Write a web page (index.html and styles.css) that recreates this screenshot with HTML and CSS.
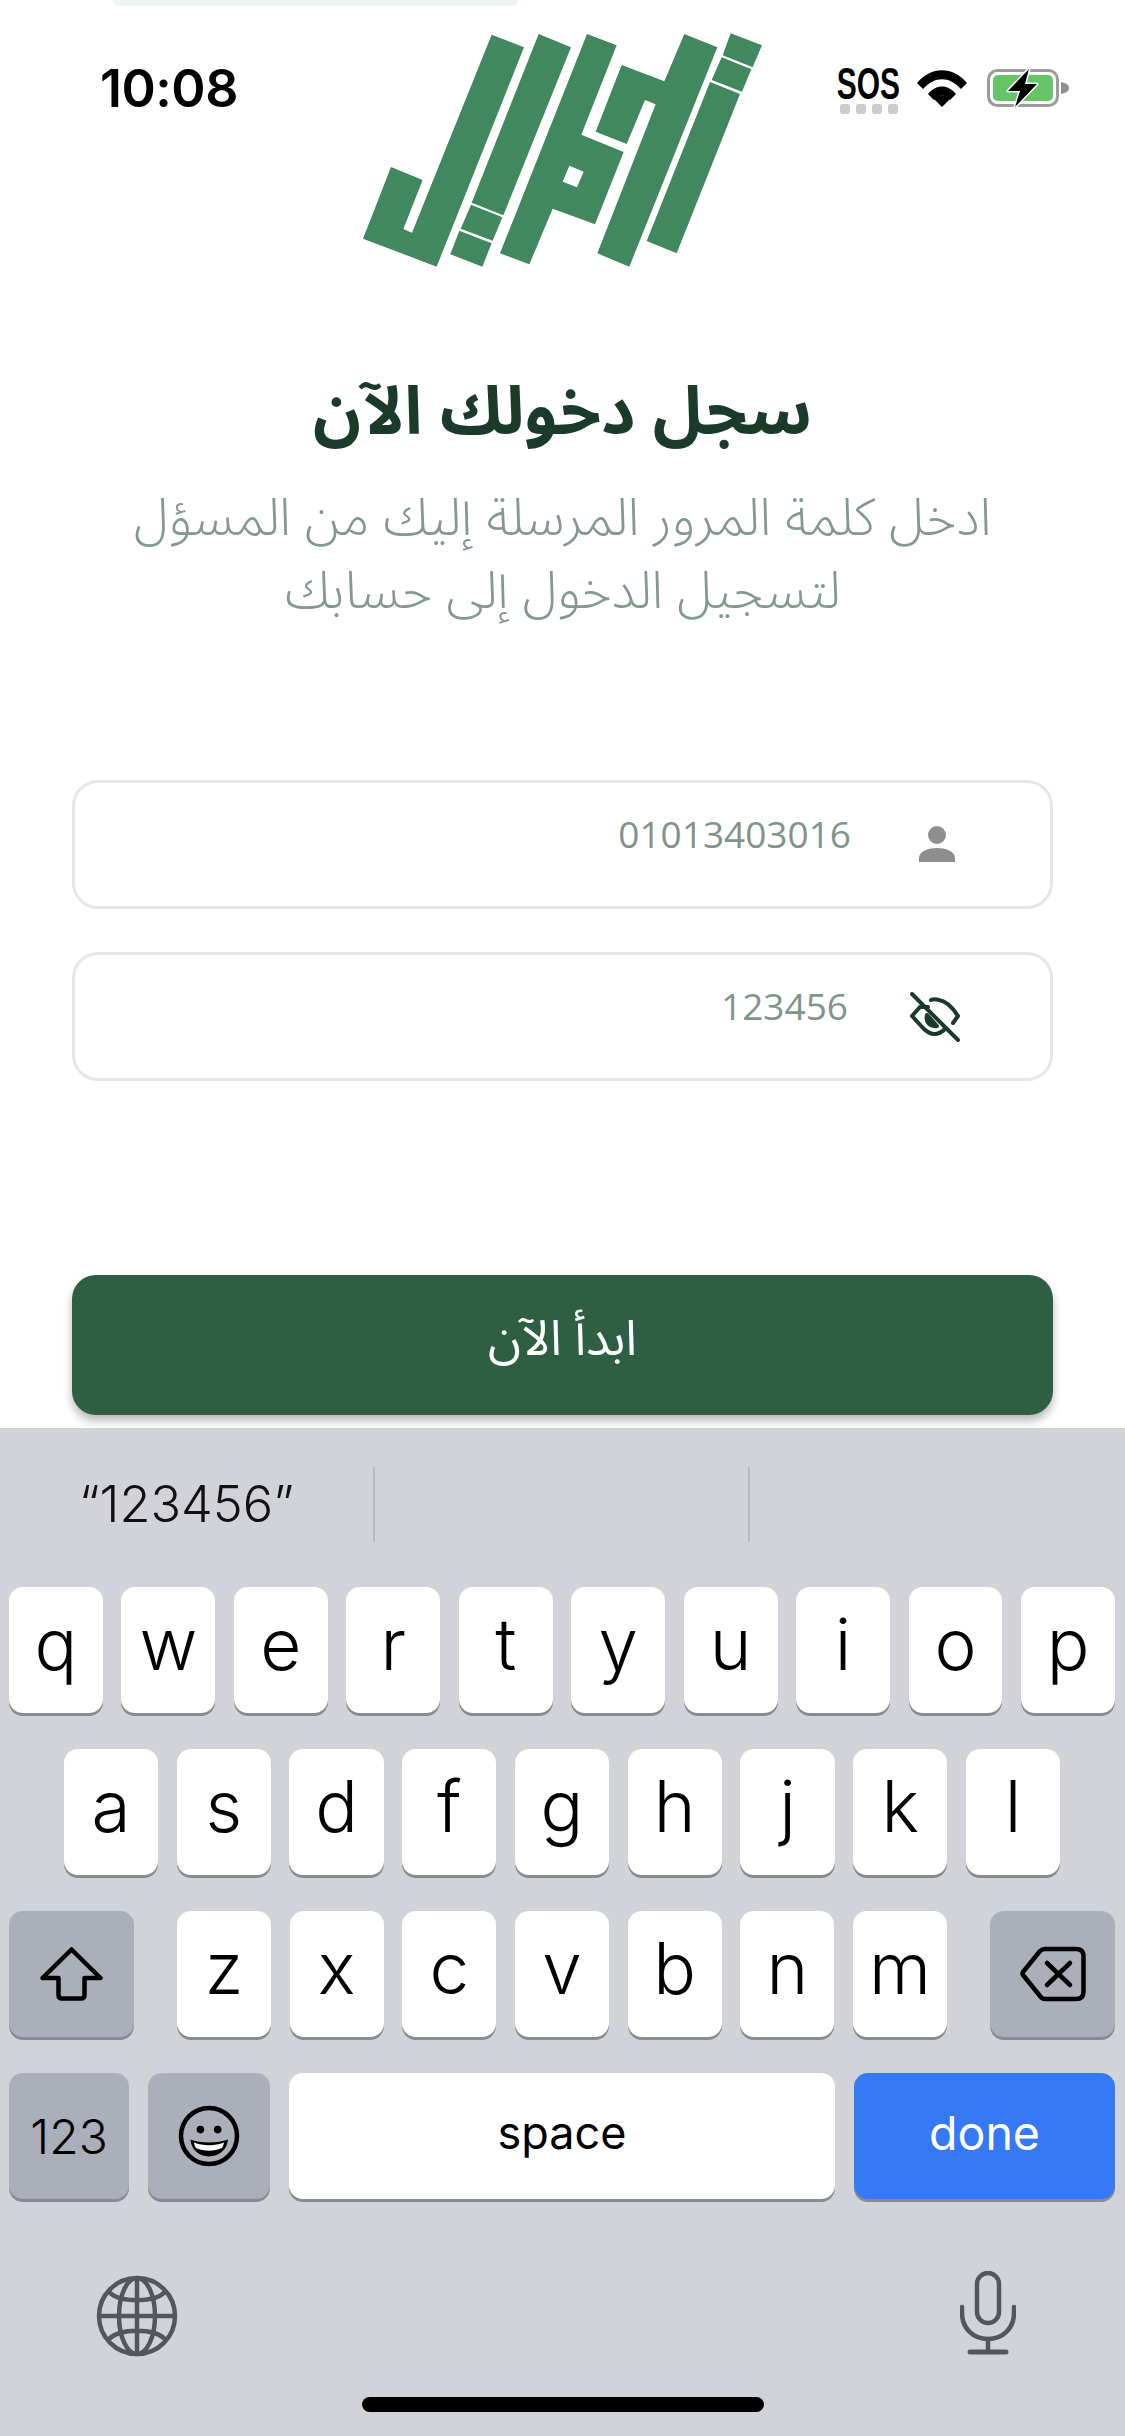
FILE: index.html
```html
<!DOCTYPE html>
<html lang="ar">
<head>
<meta charset="utf-8">
<title>تسجيل الدخول</title>
<link rel="stylesheet" href="styles.css">
</head>
<body>
<div class="page">
  <div class="status">
    <span class="time">10:08</span>
    <div class="status-right">
      <div class="sos"><span class="sos-text">SOS</span><div class="dots"><i></i><i></i><i></i><i></i></div></div>
      <svg class="wifi" viewBox="0 0 50 37"><path d="M0 13 C14 -4 36 -4 50 13 L44 19 C32 6 18 6 6 19Z M11 24 C19 14 31 14 39 24 L33 30 C28 24 22 24 17 30Z" fill="#000"/><path d="M17 29 C22 24 28 24 33 29 L25 37Z" fill="#000"/></svg>
      <svg class="battery" viewBox="0 0 82 38">
        <rect x="1.5" y="1.5" width="69" height="35" rx="9" fill="none" stroke="#9b9b9b" stroke-width="3"/>
        <rect x="6" y="6" width="60" height="26" rx="5" fill="#65c466"/>
        <path d="M74 13 C79 14 82 16 82 19 C82 22 79 24 74 25Z" fill="#8e8e8e"/>
        <path d="M42 0 L21 22 H33 L28 38 L50 15 H38Z" fill="#000" stroke="#fff" stroke-width="3" stroke-linejoin="round" paint-order="stroke"/>
      </svg>
    </div>
  </div>

  <div class="peek"></div>
  <svg class="logo" viewBox="0 0 1320 780" fill="#41885f">
    <path d="M455 44L552 82L290 740L69 656L153 441L248 480L190 627L216 638Z"/>
    <path d="M596 42L693 82L490 586L395 548Z"/>
    <path d="M393 554L487 592L458 662L362 626Z"/>
    <path d="M358 632L455 670L427 740L331 703Z"/>
    <path fill-rule="evenodd" d="M741 42L830 76L724 344L851 396L765 613L638 566L568 733L480 700Z M688 437L731 455L711 502L668 485Z"/>
    <path d="M845 135L973 184L1033 42L1132 82L868 740L772 700L947 253L915 240L860 372L767 335Z"/>
    <path d="M1110 186L1200 222L1010 700L920 663Z"/>
    <path d="M1145 112L1234 148L1206 215L1115 180Z"/>
    <path d="M1172 40L1266 76L1238 142L1148 106Z"/>
  </svg>

  <h1 class="title">سجل دخولك الآن</h1>
  <p class="sub">ادخل كلمة المرور المرسلة إليك من المسؤل<br>لتسجيل الدخول إلى حسابك</p>

  <div class="field">
    <svg class="person" viewBox="0 0 36 36"><circle cx="18" cy="9" r="9" fill="#8e8e8e"/><path d="M0 36 V32 C0 25 10 22 18 22 C26 22 36 25 36 32 V36Z" fill="#8e8e8e"/></svg>
    <span class="fval">01013403016</span>
  </div>
  <div class="field field-two">
    <svg class="eye" viewBox="0 0 50 50" fill="none" stroke="#1a3a2a" stroke-width="4" stroke-linecap="round" stroke-linejoin="round"><path d="M10 15 L2 24 L13 36 C17 40 20 42 24 42 C28 42 32 40 35 37"/><path d="M21 8 C23 7 26 7 29 8 C36 9 43 16 48 24 L43 31"/><path d="M10 15 H18"/><path d="M17 23 C15 30 20 35 27 34Z" fill="#1a3a2a"/><path d="M2 2 L48 48"/></svg>
    <span class="fval">123456</span>
  </div>

  <button class="cta">ابدأ الآن</button>

  <div class="keyboard">
    <div class="suggest">
      <div class="sg sg-first">“123456”</div><div class="sg"></div><div class="sg sg-last"></div>
    </div>
    <div class="row row1">
      <span class="key">q</span><span class="key">w</span><span class="key">e</span><span class="key">r</span><span class="key">t</span><span class="key">y</span><span class="key">u</span><span class="key">i</span><span class="key">o</span><span class="key">p</span>
    </div>
    <div class="row row2">
      <span class="key">a</span><span class="key">s</span><span class="key">d</span><span class="key">f</span><span class="key">g</span><span class="key">h</span><span class="key">j</span><span class="key">k</span><span class="key">l</span>
    </div>
    <div class="row row3">
      <span class="key dark wide"><svg width="63" height="54" viewBox="0 0 63 54" fill="none" stroke="#000" stroke-width="4.5" stroke-linejoin="round"><path d="M31.5 2.5 L60.5 31 H44.5 V48 Q44.5 51.5 41 51.5 H22 Q18.5 51.5 18.5 48 V31 H2.5Z"/></svg></span>
      <div class="letters"><span class="key">z</span><span class="key">x</span><span class="key">c</span><span class="key">v</span><span class="key">b</span><span class="key">n</span><span class="key">m</span></div>
      <span class="key dark wide"><svg width="66" height="56" viewBox="0 0 66 56" fill="none" stroke="#000" stroke-width="4.5" stroke-linejoin="round" stroke-linecap="round"><path d="M25 3 H56 Q63.5 3 63.5 10 V46 Q63.5 53 56 53 H25 Q22 53 20 50 L3 29 Q2 28 3 26 L20 5 Q22 3 25 3Z"/><path d="M27 17 L50 39 M50 17 L27 39"/></svg></span>
    </div>
    <div class="row row4">
      <span class="key dark small k123">123</span>
      <span class="key dark kemoji"><svg width="62" height="62" viewBox="0 0 62 62" fill="none"><circle cx="31" cy="31" r="28" stroke="#000" stroke-width="4.5"/><circle cx="22.4" cy="24.6" r="3.8" fill="#000"/><circle cx="39.7" cy="24.6" r="3.8" fill="#000"/><path d="M12.4 34.6 C22 38.6 40 38.6 50 34.6 C49 45 41 51.5 31 51.5 C21 51.5 13.4 45 12.4 34.6Z" fill="#000"/><path d="M16 37.5 C25 41 37 41 46 37.5 C45.5 40 44.8 41.6 44 43 C36 46.5 26 46.5 18 43 C17 41.6 16.4 40 16 37.5Z" fill="#fff"/></svg></span>
      <span class="key small kspace">space</span>
      <span class="key small kdone">done</span>
    </div>
    <div class="kb-bottom">
      <svg class="globe" width="82" height="82" viewBox="0 0 82 82" fill="none" stroke="#54565b" stroke-width="4.5"><circle cx="41" cy="41" r="38"/><ellipse cx="41" cy="41" rx="18" ry="38"/><path d="M41 3 V79 M3 41 H79 M13 17 C24 28 58 28 69 17 M13 64 C24 53 58 53 69 64"/></svg>
      <svg class="mic" width="56" height="84" viewBox="0 0 56 84" fill="none" stroke="#54565b" stroke-width="4.5" stroke-linecap="round"><rect x="17" y="2" width="22" height="50" rx="11"/><path d="M2 36 V42 C2 57 13 68 28 68 C43 68 54 57 54 42 V36"/><path d="M28 68 V81"/><path d="M10 81 H46" stroke-width="5"/></svg>
    </div>
    <div class="home"></div>
  </div>
</div>
</body>
</html>
```
FILE: styles.css
```css
* { box-sizing: border-box; }
html, body { margin: 0; padding: 0; }
body { width: 1125px; height: 2436px; overflow: hidden; background: #fff; font-family: Inter, "Liberation Sans", sans-serif; }
.page { position: relative; width: 1125px; height: 2436px; display: flex; flex-direction: column; }

.status { position: absolute; top: 0; left: 0; right: 0; padding: 0 56px 0 100px; height: 120px; display: flex; justify-content: space-between; }
.time { font-family: Inter, "Liberation Sans", sans-serif; font-weight: 600; font-size: 52px; line-height: 50px; margin-top: 64px; color: #000; letter-spacing: -0.5px; }
.status-right { display: flex; align-items: flex-start; padding-top: 67px; }
.sos { width: 61px; display: flex; flex-direction: column; align-items: center; }
.sos-text { font-family: "Liberation Sans", sans-serif; font-weight: 700; font-size: 44px; line-height: 33px; height: 33px; transform: scaleX(0.68); color: #000; display: block; }
.dots { display: flex; gap: 6px; margin-top: 4px; }
.dots i { width: 10px; height: 10px; border-radius: 3px; background: #ccc; display: block; }
.wifi { width: 50px; height: 37px; margin-left: 18px; margin-top: 3px; }
.battery { width: 82px; height: 38px; margin-left: 20px; margin-top: 2px; }

.peek { width: 405px; height: 6px; margin-left: 113px; background: #edf5f1; border-radius: 0 0 12px 12px; }
.logo { width: 440px; height: 260px; margin: 14px 0 0 340px; display: block; flex: none; }

.title { margin: 91px 0 0; text-align: center; direction: rtl; font-family: "Noto Sans Arabic", "DejaVu Sans", sans-serif; font-weight: 700; font-size: 66.5px; line-height: 84px; color: #1a3a2a; }
.sub { margin: 27px 0 0; text-align: center; direction: rtl; font-family: "Noto Sans Arabic", "DejaVu Sans", sans-serif; font-weight: 300; font-size: 52px; line-height: 73px; color: #829a8d; }

.field { margin: 152px 72px 0 72px; height: 129px; border: 3px solid #e3e7e5; border-radius: 26px; background: #fff; display: flex; flex-direction: row-reverse; align-items: flex-start; flex: none; padding-right: 95px; gap: 68px; }
.field-two { margin-top: 43px; padding-right: 90px; gap: 62px; }
.fval { font-family: "Open Sans", sans-serif; font-weight: 400; font-size: 37px; line-height: 50px; color: #7f9588; margin-top: 26px; }
.person { width: 36px; height: 36px; margin-top: 43px; flex: none; }
.eye { width: 50px; height: 50px; margin-top: 37px; flex: none; }

.cta { margin: 194px 72px 0; height: 140px; border: 0; border-radius: 24px; background: #2e5f43; color: #fff; font-family: "Noto Sans Arabic", "DejaVu Sans", sans-serif; font-size: 49px; font-weight: 400; box-shadow: 0 6px 10px rgba(0,0,0,.28); flex: none; direction: rtl; padding: 0 0 12px; }

.keyboard { margin-top: auto; height: 1008px; background: #d1d3d9; display: flex; flex-direction: column; flex: none; }
.suggest { display: flex; height: 159px; padding-top: 39px; flex: none; }
.sg { width: 375px; height: 75px; border-right: 2px solid #b8babf; display: flex; align-items: center; font-size: 50.5px; font-weight: 300; color: #111; padding: 0 0 0 79px; }
.sg-first { padding-bottom: 3px; }
.sg-last { border-right: 0; }

.row { display: flex; gap: 18.6px; height: 126px; margin-bottom: 36px; flex: none; }
.row1 { padding: 0 10px 0 9px; }
.row2 { padding: 0 65px 0 64px; }
.row3 { padding: 0 10px 0 9px; gap: 43px; }
.row4 { padding: 0 10px 0 9px; gap: 19px; }
.letters { display: flex; gap: 18.6px; flex: 1; }
.key { flex: 1 1 0; height: 126px; background: #fff; border-radius: 14px; box-shadow: 0 3px 0 #8a8b90; font-size: 71px; font-weight: 300; line-height: 114px; text-align: center; color: #000; display: flex; justify-content: center; align-items: flex-start; }
.key.dark { background: #abafba; }
.key.wide { flex: 0 0 125px; align-items: center; }
.key.small { font-size: 45px; font-weight: 400; line-height: 120px; }
.key.k123 { flex: 0 0 120px; font-size: 48px; font-weight: 300; line-height: 128px; }
.key.kdone { flex: 0 0 261px; background: #3579f6; color: #fff; font-size: 46.5px; }
.kemoji { flex: 0 0 122px; align-items: center; }
.kspace { flex: 1 1 0; }

.kb-bottom { display: flex; justify-content: space-between; padding: 0 109px 0 96px; margin-top: 36px; align-items: flex-start; height: 86px; flex: none; }
.globe { margin-top: 4px; }
.home { width: 402px; height: 15px; border-radius: 8px; background: #000; margin: 40px auto 0; flex: none; }
```
